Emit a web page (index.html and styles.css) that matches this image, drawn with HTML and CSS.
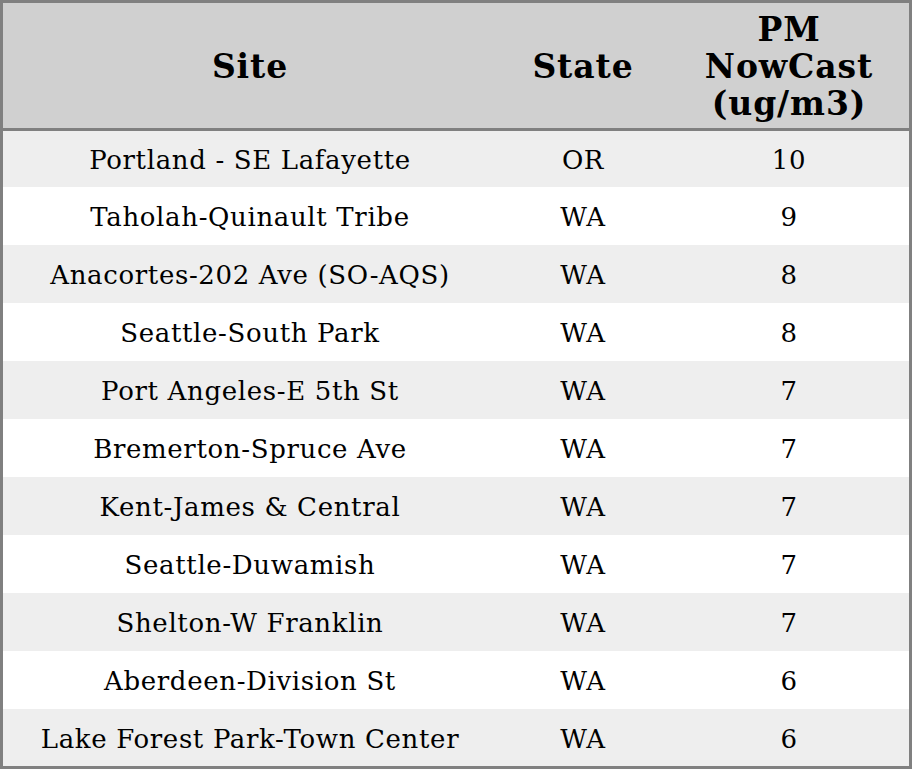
FILE: index.html
```html
<!DOCTYPE html>
<html>
<head>
<meta charset="utf-8">
<link rel="stylesheet" href="styles.css">
</head>
<body>
<table class="grid">
<colgroup><col class="c-site"><col class="c-state"><col class="c-pm"></colgroup>
<thead>
<tr><th>Site</th><th>State</th><th>PM NowCast (ug/m3)</th></tr>
</thead>
<tbody>
<tr><td>Portland - SE Lafayette</td><td>OR</td><td>10</td></tr>
<tr><td>Taholah-Quinault Tribe</td><td>WA</td><td>9</td></tr>
<tr><td>Anacortes-202 Ave (SO-AQS)</td><td>WA</td><td>8</td></tr>
<tr><td>Seattle-South Park</td><td>WA</td><td>8</td></tr>
<tr><td>Port Angeles-E 5th St</td><td>WA</td><td>7</td></tr>
<tr><td>Bremerton-Spruce Ave</td><td>WA</td><td>7</td></tr>
<tr><td>Kent-James &amp; Central</td><td>WA</td><td>7</td></tr>
<tr><td>Seattle-Duwamish</td><td>WA</td><td>7</td></tr>
<tr><td>Shelton-W Franklin</td><td>WA</td><td>7</td></tr>
<tr><td>Aberdeen-Division St</td><td>WA</td><td>6</td></tr>
<tr><td>Lake Forest Park-Town Center</td><td>WA</td><td>6</td></tr>
</tbody>
</table>
</body>
</html>
```
FILE: styles.css
```css
html, body { margin: 0; padding: 0; background: #fff; }
.grid {
  width: 912px;
  height: 769px;
  border-collapse: separate;
  border-spacing: 0;
  border: 3px solid #808080;
  box-sizing: border-box;
  table-layout: fixed;
  font-family: "DejaVu Serif", serif;
  color: #000;
}
.c-site { width: 494px; }
.c-state { width: 172px; }
.c-pm { width: 240px; }
.grid th {
  background: #d0d0d0;
  font-weight: bold;
  font-size: 33px;
  letter-spacing: 0.9px;
  line-height: 37px;
  height: 123px;
  padding: 2px 6px 0;
  border-bottom: 3px solid #808080;
  text-align: center;
  vertical-align: middle;
}
.grid td {
  font-size: 26px;
  letter-spacing: 0.65px;
  height: 56px;
  padding: 2px 0 0;
  text-align: center;
  vertical-align: middle;
}
.grid tbody tr:first-child td { height: 54px; }
.grid tbody tr:last-child td { height: 55px; }
.grid tbody tr:nth-child(odd) td { background: #eeeeee; }
.grid tbody tr:nth-child(even) td { background: #ffffff; }
```
